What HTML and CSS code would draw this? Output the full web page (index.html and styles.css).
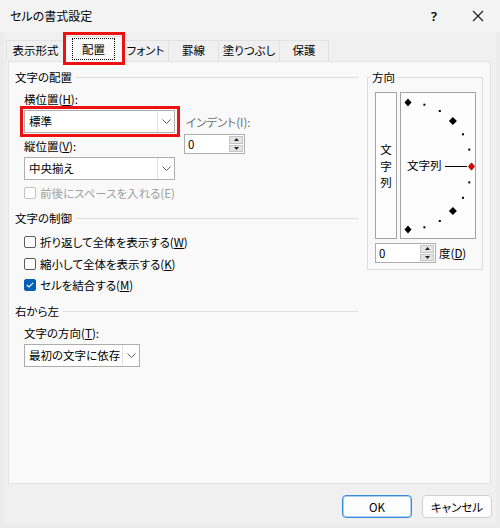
FILE: index.html
```html
<!DOCTYPE html>
<html lang="ja">
<head>
    <meta charset="UTF-8">
    <meta name="viewport" content="width=device-width, initial-scale=1.0">
    <title>セルの書式設定</title>
    <link rel="stylesheet" href="styles.css">
</head>
<body>
    <div class="titlebar">
        <span class="title">セルの書式設定</span>
        <span class="help">?</span>
        <span class="close">
            <svg width="12" height="12" viewBox="0 0 12 12"><path d="M1 1 L11 11 M11 1 L1 11" stroke="#1a1a1a" stroke-width="1.1" fill="none"/></svg>
        </span>
    </div>

    <div class="dialog">
        <!-- Tabs -->
        <div class="tabs">
            <div class="tab" style="width:59px">表示形式</div>
            <div class="tab active"><span class="focus">配置</span></div>
            <div class="tab" style="width:47px">フォント</div>
            <div class="tab" style="width:51px">罫線</div>
            <div class="tab" style="width:62px">塗りつぶし</div>
            <div class="tab" style="width:50px">保護</div>
        </div>

        <div class="panel">
            <div class="left">
                <div class="section">文字の配置</div>
                <div class="align-grid">
                    <div class="col">
                        <div class="label">横位置(<u>H</u>):</div>
                        <div class="combo marked">
                            <span class="val">標準</span>
                            <span class="arrow"><svg width="9" height="5" viewBox="0 0 9 5"><path d="M0.5 0.5 L4.5 4.5 L8.5 0.5" stroke="#606060" fill="none"/></svg></span>
                        </div>
                        <div class="label gap-v">縦位置(<u>V</u>):</div>
                        <div class="combo">
                            <span class="val">中央揃え</span>
                            <span class="arrow"><svg width="9" height="5" viewBox="0 0 9 5"><path d="M0.5 0.5 L4.5 4.5 L8.5 0.5" stroke="#606060" fill="none"/></svg></span>
                        </div>
                    </div>
                    <div class="col indent">
                        <div class="label dim">インデント(I):</div>
                        <div class="spin indent-spin">
                            <span class="val">0</span>
                            <span class="spin-btns">
                                <span><svg width="5" height="3" viewBox="0 0 5 3"><path d="M0 3 L2.5 0 L5 3 Z" fill="#222"/></svg></span>
                                <span><svg width="5" height="3" viewBox="0 0 5 3"><path d="M0 0 L2.5 3 L5 0 Z" fill="#222"/></svg></span>
                            </span>
                        </div>
                    </div>
                </div>
                <div class="check disabled cb-space"><span class="box"></span><span>前後にスペースを入れる(E)</span></div>

                <div class="section sec2">文字の制御</div>
                <div class="check cb-wrap"><span class="box"></span><span>折り返して全体を表示する(<u>W</u>)</span></div>
                <div class="check cb-shrink"><span class="box"></span><span>縮小して全体を表示する(<u>K</u>)</span></div>
                <div class="check checked cb-merge"><span class="box"><svg width="8" height="6" viewBox="0 0 8 6"><path d="M0.8 3 L3 5 L7.2 0.8" stroke="#fff" stroke-width="1.2" fill="none"/></svg></span><span>セルを結合する(<u>M</u>)</span></div>

                <div class="section sec3">右から左</div>
                <div class="label label-t">文字の方向(<u>T</u>):</div>
                <div class="combo dir">
                    <span class="val">最初の文字に依存</span>
                    <span class="arrow"><svg width="9" height="5" viewBox="0 0 9 5"><path d="M0.5 0.5 L4.5 4.5 L8.5 0.5" stroke="#606060" fill="none"/></svg></span>
                </div>
            </div>

            <fieldset class="orient">
                <legend>方向</legend>
                <div class="orient-row">
                    <div class="vtext"><span>文</span><span>字</span><span>列</span></div>
                    <div class="dial">
                        <svg width="74" height="145" viewBox="0 0 74 145">
                            <g fill="#000">
                                <path d="M7 5.5 L10.5 9.5 L7 13.5 L3.5 9.5 Z"/>
                                <rect x="22.4" y="10.7" width="2" height="2"/>
                                <rect x="37.8" y="17" width="2" height="2"/>
                                <path d="M51.9 24.1 L55.9 28.1 L51.9 32.1 L47.9 28.1 Z"/>
                                <rect x="61" y="40.3" width="2" height="2"/>
                                <rect x="67.3" y="55.6" width="2" height="2"/>
                                <rect x="67.3" y="88.4" width="2" height="2"/>
                                <rect x="61" y="103.8" width="2" height="2"/>
                                <path d="M51.9 113.9 L55.9 117.9 L51.9 121.9 L47.9 117.9 Z"/>
                                <rect x="37.8" y="127" width="2" height="2"/>
                                <rect x="22.4" y="133.3" width="2" height="2"/>
                                <path d="M7 132.5 L10.5 136.5 L7 140.5 L3.5 136.5 Z"/>
                            </g>
                            <text x="6" y="77" font-size="11.5" fill="#000" font-family="Noto Sans CJK JP, sans-serif">文字列</text>
                            <line x1="44" y1="73.5" x2="66" y2="73.5" stroke="#000" stroke-width="1"/>
                            <path d="M70.5 69.8 L73.7 73.5 L70.5 77.2 L67.3 73.5 Z" fill="#e00000" stroke="#600" stroke-width="0.6"/>
                        </svg>
                    </div>
                </div>
                <div class="deg-row">
                    <div class="spin deg-spin">
                        <span class="val">0</span>
                        <span class="spin-btns">
                            <span><svg width="5" height="3" viewBox="0 0 5 3"><path d="M0 3 L2.5 0 L5 3 Z" fill="#222"/></svg></span>
                            <span><svg width="5" height="3" viewBox="0 0 5 3"><path d="M0 0 L2.5 3 L5 0 Z" fill="#222"/></svg></span>
                        </span>
                    </div>
                    <span class="deg-label">度(<u>D</u>)</span>
                </div>
            </fieldset>
        </div>

        <div class="actions">
            <button class="btn primary">OK</button>
            <button class="btn">キャンセル</button>
        </div>
    </div>
</body>
</html>
```

FILE: styles.css
```css
body {
    margin: 0;
    width: 500px;
    height: 528px;
    background-color: #ececec;
    font-family: "Noto Sans CJK JP", "Noto Sans", sans-serif;
    font-size: 11.5px;
    font-feature-settings: "palt";
    color: #000;
    overflow: hidden;
}

u {
    text-underline-offset: 1px;
}

/* Title bar */
.titlebar {
    display: flex;
    align-items: center;
    height: 31px;
    padding: 0 12px 1px 10px;
    background-color: #f3f3f3;
}

.title {
    flex: 1;
    font-size: 12px;
}

.help {
    width: 20px;
    text-align: center;
    font-size: 13px;
    font-weight: 600;
    font-family: "Noto Sans", sans-serif;
}

.close {
    display: flex;
    justify-content: center;
    width: 20px;
    margin-left: 24px;
}

/* Dialog body */
.dialog {
    margin: 0 4px;
    height: 492px;
    background-color: #f0f0f0;
}

.tabs {
    display: flex;
    align-items: flex-end;
    height: 29px;
    padding-left: 2px;
}

.tab {
    box-sizing: border-box;
    height: 21px;
    line-height: 19px;
    text-align: center;
    border: 1px solid #e2e2e2;
    border-bottom: none;
    margin-right: -1px;
    background-color: #f0f0f0;
}

.tab.active {
    position: relative;
    z-index: 2;
    width: 59px;
    height: 26px;
    margin-bottom: -1px;
    padding: 1px 7px 2px;
    background-color: #f9f9f9;
    border-color: #dcdcdc;
}

.tab.active .focus {
    display: block;
    height: 22px;
    line-height: 21px;
    box-sizing: border-box;
    border: 1px dotted #000;
}

.tab.active::after {
    content: "";
    position: absolute;
    top: -5px;
    bottom: -3px;
    left: -2px;
    right: -3px;
    border: 3px solid #ee1111;
}

.panel {
    box-sizing: border-box;
    display: flex;
    align-items: flex-start;
    margin-left: 4px;
    width: 483px;
    height: 423px;
    padding: 7px 7px 0 6px;
    background-color: #f9f9f9;
    border: 1px solid #e3e3e3;
}

.left {
    width: 343px;
}

.section {
    display: flex;
    align-items: center;
    gap: 4px;
    height: 16px;
    line-height: 16px;
}

.section::after {
    content: "";
    flex: 1;
    height: 1px;
    background-color: #dedede;
}

.sec2 { margin-top: 9px; }
.sec3 { margin-top: 10px; }

.label {
    height: 16px;
    line-height: 16px;
    white-space: nowrap;
}

.label.dim {
    color: #6e6e6e;
    margin-left: 2px;
}

.label-t {
    margin: 6px 0 0 9px;
}

.align-grid {
    display: flex;
    gap: 9px;
    margin: 6px 0 0 9px;
}

.align-grid .col {
    width: 151px;
}

.align-grid .indent {
    width: auto;
    padding-top: 23px;
}

.gap-v { margin-top: 5px; }

/* Combo box */
.combo {
    box-sizing: border-box;
    display: flex;
    height: 23px;
    margin-top: 3px;
    background-color: #fff;
    border: 1px solid #adadad;
}

.combo .val {
    flex: 1;
    padding-left: 4px;
    line-height: 21px;
    white-space: nowrap;
}

.combo .arrow {
    display: flex;
    align-items: center;
    justify-content: center;
    width: 16px;
    border-left: 1px solid #e0e0e0;
}

.combo.marked {
    position: relative;
}

.combo.marked::after {
    content: "";
    position: absolute;
    top: -5px;
    bottom: -5px;
    left: -5px;
    right: -6px;
    border: 3px solid #ee1111;
}

.combo.dir {
    width: 116px;
    margin-left: 9px;
}

/* Spin box */
.spin {
    box-sizing: border-box;
    display: flex;
    height: 20px;
    background-color: #fff;
    border: 1px solid #adadad;
}

.spin .val {
    flex: 1;
    padding-left: 3px;
    line-height: 18px;
}

.spin-btns {
    display: flex;
    flex-direction: column;
    gap: 1px;
    width: 14px;
    margin: 1px;
}

.spin-btns span {
    flex: 1;
    display: flex;
    align-items: center;
    justify-content: center;
    background-color: #e4e4e4;
    border: 1px solid #c4c4c4;
}

.indent-spin {
    width: 61px;
    margin-top: 4px;
}

/* Checkboxes */
.check {
    display: flex;
    align-items: center;
    gap: 4px;
    height: 16px;
    margin-left: 9px;
    white-space: nowrap;
}

.check .box {
    box-sizing: border-box;
    display: flex;
    align-items: center;
    justify-content: center;
    width: 12px;
    height: 12px;
    background-color: #fff;
    border: 1px solid #5c5c5c;
    border-radius: 2px;
}

.check.disabled {
    color: #a0a0a0;
}

.check.disabled .box {
    border-color: #c2c2c2;
}

.check.checked .box {
    background-color: #005fb8;
    border-color: #005fb8;
}

.cb-space { margin-top: 5px; }
.cb-wrap { margin-top: 8px; }
.cb-shrink { margin-top: 6px; }
.cb-merge { margin-top: 5px; }

/* Orientation group */
.orient {
    box-sizing: border-box;
    width: 116px;
    margin: 0 0 0 9px;
    padding: 7px 6px 6px 7px;
    border: 1px solid #dcdcdc;
    min-width: 0;
}

.orient legend {
    padding: 0 2px;
    margin-left: -5px;
    line-height: 16px;
}

.orient-row {
    display: flex;
    gap: 3px;
}

.vtext {
    box-sizing: border-box;
    display: flex;
    flex-direction: column;
    align-items: center;
    justify-content: center;
    width: 22px;
    height: 147px;
    line-height: 16.5px;
    padding-top: 1px;
    background-color: #fdfdfd;
    border: 1px solid #a3a3a3;
}

.dial {
    box-sizing: border-box;
    width: 76px;
    height: 147px;
    background-color: #fdfdfd;
    border: 1px solid #a3a3a3;
}

.dial svg {
    display: block;
}

.deg-row {
    display: flex;
    align-items: center;
    margin-top: 4px;
}

.deg-spin {
    width: 61px;
}

.deg-label {
    margin-left: 3px;
}

/* Buttons */
.actions {
    display: flex;
    justify-content: flex-end;
    gap: 10px;
    margin-top: 11px;
    padding-right: 4px;
}

.btn {
    box-sizing: border-box;
    width: 70px;
    height: 23px;
    padding: 0;
    font-family: inherit;
    font-size: 11.5px;
    font-feature-settings: "palt";
    color: #000;
    background-color: #fdfdfd;
    border: 1px solid #d0d0d0;
    border-radius: 4px;
}

.btn.primary {
    border-color: #3a8ad8;
    box-shadow: inset 0 0 0 1px #a9cff2;
}
```
